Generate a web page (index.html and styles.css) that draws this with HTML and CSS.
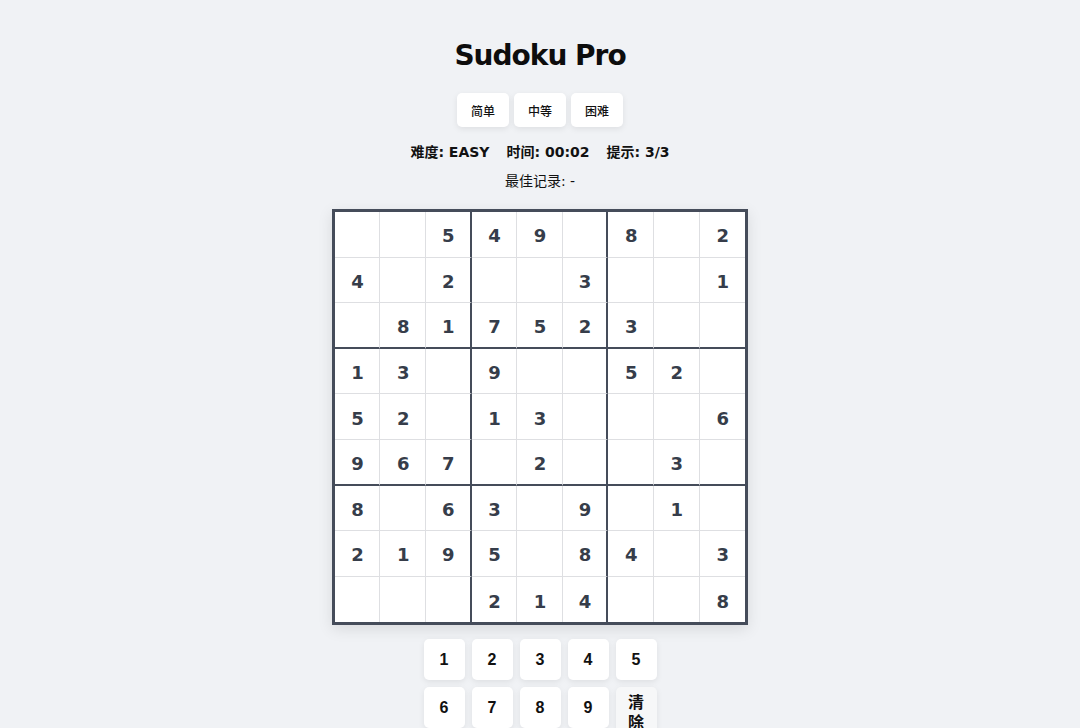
FILE: index.html
```html
<!DOCTYPE html>
<html lang="zh">
<head>
<meta charset="utf-8">
<title>Sudoku Pro</title>
<link rel="stylesheet" href="styles.css">
</head>
<body>
<main class="app">
  <h1 class="title">Sudoku Pro</h1>
  <div class="levels">
    <button class="level">简单</button>
    <button class="level">中等</button>
    <button class="level">困难</button>
  </div>
  <div class="info">
    <span>难度: EASY</span>
    <span>时间: 00:02</span>
    <span>提示: 3/3</span>
  </div>
  <div class="best">最佳记录: -</div>
  <div class="board">
    <div class="cell"></div><div class="cell"></div><div class="cell c3">5</div><div class="cell">4</div><div class="cell">9</div><div class="cell c3"></div><div class="cell">8</div><div class="cell"></div><div class="cell c9">2</div>
    <div class="cell">4</div><div class="cell"></div><div class="cell c3">2</div><div class="cell"></div><div class="cell"></div><div class="cell c3">3</div><div class="cell"></div><div class="cell"></div><div class="cell c9">1</div>
    <div class="cell r3"></div><div class="cell r3">8</div><div class="cell r3 c3">1</div><div class="cell r3">7</div><div class="cell r3">5</div><div class="cell r3 c3">2</div><div class="cell r3">3</div><div class="cell r3"></div><div class="cell r3 c9"></div>
    <div class="cell">1</div><div class="cell">3</div><div class="cell c3"></div><div class="cell">9</div><div class="cell"></div><div class="cell c3"></div><div class="cell">5</div><div class="cell">2</div><div class="cell c9"></div>
    <div class="cell">5</div><div class="cell">2</div><div class="cell c3"></div><div class="cell">1</div><div class="cell">3</div><div class="cell c3"></div><div class="cell"></div><div class="cell"></div><div class="cell c9">6</div>
    <div class="cell r3">9</div><div class="cell r3">6</div><div class="cell r3 c3">7</div><div class="cell r3"></div><div class="cell r3">2</div><div class="cell r3 c3"></div><div class="cell r3"></div><div class="cell r3">3</div><div class="cell r3 c9"></div>
    <div class="cell">8</div><div class="cell"></div><div class="cell c3">6</div><div class="cell">3</div><div class="cell"></div><div class="cell c3">9</div><div class="cell"></div><div class="cell">1</div><div class="cell c9"></div>
    <div class="cell">2</div><div class="cell">1</div><div class="cell c3">9</div><div class="cell">5</div><div class="cell"></div><div class="cell c3">8</div><div class="cell">4</div><div class="cell"></div><div class="cell c9">3</div>
    <div class="cell r9"></div><div class="cell r9"></div><div class="cell r9 c3"></div><div class="cell r9">2</div><div class="cell r9">1</div><div class="cell r9 c3">4</div><div class="cell r9"></div><div class="cell r9"></div><div class="cell r9 c9">8</div>
  </div>
  <div class="pad">
    <button class="key">1</button>
    <button class="key">2</button>
    <button class="key">3</button>
    <button class="key">4</button>
    <button class="key">5</button>
    <button class="key">6</button>
    <button class="key">7</button>
    <button class="key">8</button>
    <button class="key">9</button>
    <button class="key clear">清除</button>
  </div>
</main>
</body>
</html>
```
FILE: styles.css
```css
html, body {
  margin: 0;
  padding: 0;
  background: #f0f2f5;
  height: 100%;
  overflow: hidden;
}

body {
  font-family: "DejaVu Sans", "Noto Sans CJK SC", sans-serif;
  color: #111;
}

.app {
  display: flex;
  flex-direction: column;
  align-items: center;
  padding-top: 38px;
}

.title {
  margin: 0;
  font-size: 28px;
  line-height: 36px;
  font-weight: bold;
  color: #0d0d0d;
  letter-spacing: -1px;
}

.levels {
  display: flex;
  gap: 5px;
  margin-top: 19px;
}

.level {
  width: 52px;
  height: 34px;
  padding: 0;
  border: none;
  border-radius: 5px;
  background: #fff;
  box-shadow: 0 2px 6px rgba(0, 0, 0, 0.08);
  font-family: "Noto Sans CJK SC", sans-serif;
  font-size: 12px;
  font-weight: 500;
  color: #111;
}

.info {
  display: flex;
  gap: 17px;
  margin-top: 15px;
  font-size: 14px;
  line-height: 20px;
  font-weight: bold;
  color: #111;
}

.best {
  margin-top: 9px;
  font-size: 14px;
  line-height: 20px;
  color: #111;
}

.board {
  margin-top: 18px;
  display: grid;
  grid-template-columns: repeat(9, 45.6px);
  grid-template-rows: repeat(9, 45.6px);
  border: 3px solid #454c5a;
  background: #fff;
  box-shadow: 0 4px 14px rgba(0, 0, 0, 0.1);
}

.cell {
  box-sizing: border-box;
  display: flex;
  align-items: center;
  justify-content: center;
  padding-top: 3px;
  padding-left: 1px;
  border-right: 1px solid #dedfe2;
  border-bottom: 1px solid #dedfe2;
  font-size: 18px;
  font-weight: bold;
  color: #363d4a;
}

.cell.c3 {
  border-right: 2px solid #454c5a;
}

.cell.c9 {
  border-right: none;
}

.cell.r3 {
  border-bottom: 2px solid #454c5a;
}

.cell.r9 {
  border-bottom: none;
}

.pad {
  margin-top: 14px;
  display: grid;
  grid-template-columns: repeat(5, 41px);
  gap: 7px;
}

.key {
  height: 41px;
  padding: 0 8px;
  border: none;
  border-radius: 5px;
  background: #fff;
  box-shadow: 0 2px 6px rgba(0, 0, 0, 0.08);
  font-family: "Liberation Sans", "Noto Sans CJK SC", sans-serif;
  font-size: 16px;
  font-weight: bold;
  color: #111;
}

.key.clear {
  background: #f6f7f8;
  height: auto;
  min-height: 41px;
  padding: 6px 8px;
  line-height: 20px;
}
```
